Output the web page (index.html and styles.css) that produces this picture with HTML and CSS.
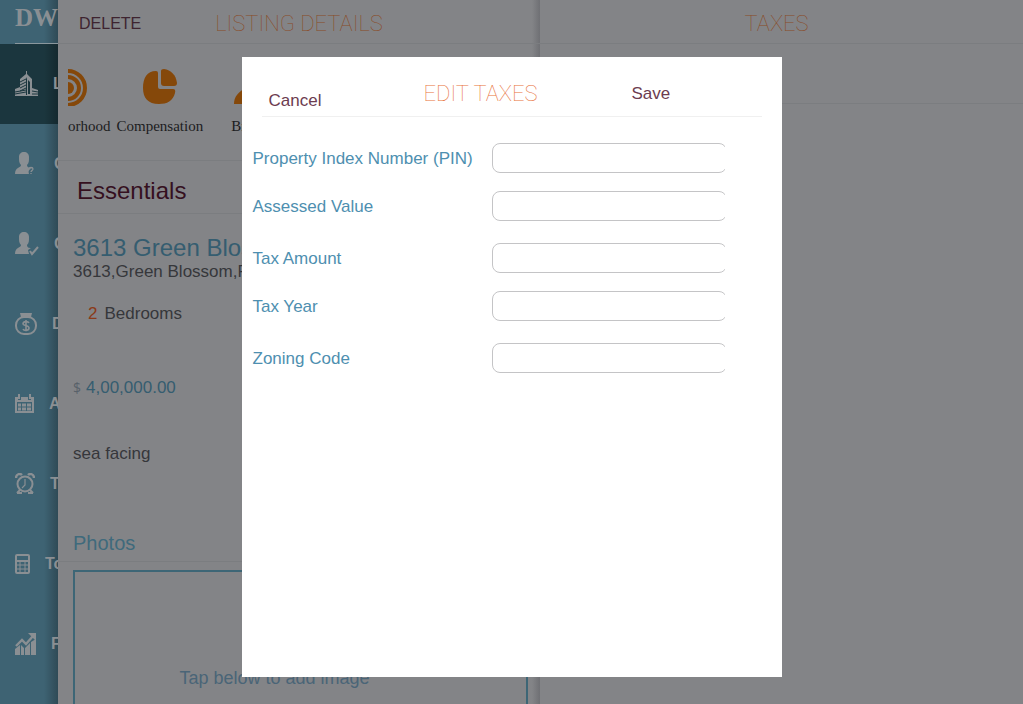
FILE: index.html
```html
<!DOCTYPE html>
<html lang="en">
<head>
    <meta charset="utf-8">
    <title>Edit Taxes</title>
    <link rel="stylesheet" href="styles.css">
</head>
<body>

    <div class="app">
        <nav class="sidebar">
            <div class="logo">DW</div>
            <a href="#" class="nav-item active">
                <svg width="23" height="26" viewBox="0 0 23 26" fill="currentColor">
                    <path d="M5 8l6-5V0h1v3l5 5v16h-5V6l-1 2v16H5z"/>
                    <path d="M0 18l5-2v9H0zM17 17l6 2v6h-6zM0 24h23v1H0z"/>
                    <path d="M5 11l6-3M5 14l6-3M5 17l6-3M5 20l6-3M0 21l11-2M0 23l11-2M17 20l6 1M17 23h6" fill="none" stroke="#1b363e"/>
                    <path d="M13 9l2 2v12h-2z" fill="#1b363e"/>
                </svg>
                <span>L</span>
            </a>
            <a href="#" class="nav-item">
                <svg width="24" height="24" viewBox="0 0 24 24" fill="currentColor">
                    <path d="M4 5c0-3 2-5 5-5s5 2 5 5c0 4 0 6-2 8 0 3 4 3 5 4-3 0-4 2-3 5H0c0-7 6-6 6-9-2-2-2-4-2-8z"/>
                    <path d="M14 17c0-2 4-2 4 0 0 1-2 2-2 3M16 21v1" fill="none" stroke="currentColor" stroke-width="1.3"/>
                </svg>
                <span>C</span>
            </a>
            <a href="#" class="nav-item">
                <svg width="24" height="24" viewBox="0 0 24 24" fill="currentColor">
                    <path d="M4 5c0-3 2-5 5-5s5 2 5 5c0 4 0 6-2 8 0 3 3 3 4 3l-3 2 1 4H0c0-7 6-6 6-9-2-2-2-4-2-8z"/>
                    <path d="M15 19l2 3 6-7" fill="none" stroke="currentColor" stroke-width="2"/>
                </svg>
                <span>C</span>
            </a>
            <a href="#" class="nav-item">
                <svg width="22" height="24" viewBox="0 0 22 24" fill="none" stroke="currentColor">
                    <path d="M5 1h12l-1 4H6z" fill="currentColor" stroke="none"/>
                    <rect x="1" y="5" width="20" height="17" rx="8" stroke-width="2"/>
                    <path d="M14 11c-1-2-6-2-6 1 0 2 6 1 6 4 0 3-5 3-6 1M11 8v11" stroke-width="1.6"/>
                </svg>
                <span>D</span>
            </a>
            <a href="#" class="nav-item">
                <svg width="19" height="20" viewBox="0 0 19 20" fill="none" stroke="currentColor">
                    <path d="M0 3h3v3h3V3h7v3h3V3h3v5H0z" fill="currentColor" stroke="none"/>
                    <path d="M1 7v11h17V7M4 0v5M15 0v5" stroke-width="2"/>
                    <path d="M3 11h13M3 15h13" stroke-width="3" stroke-dasharray="3 1 4 1 4"/>
                </svg>
                <span>A</span>
            </a>
            <a href="#" class="nav-item">
                <svg width="20" height="22" viewBox="0 0 20 22" fill="none" stroke="currentColor">
                    <circle cx="10" cy="11" r="7.5" stroke-width="2"/>
                    <path d="M1 5c0-4 4-5 6-3M19 5c0-4-4-5-6-3" stroke-width="2.4"/>
                    <path d="M10 6v6l-3 3" stroke-width="1.2"/>
                    <path d="M2 20l3-3M18 20l-3-3M2 20h5M18 20h-5" stroke-width="2"/>
                </svg>
                <span>T</span>
            </a>
            <a href="#" class="nav-item">
                <svg width="15" height="20" viewBox="0 0 15 20" fill="none" stroke="currentColor">
                    <rect x="1" y="1" width="13" height="18" rx="1" stroke-width="2"/>
                    <path d="M1 7h13M1 11h13M1 15h13M5 7v12M10 7v12"/>
                    <path d="M1 7h13" stroke-width="2"/>
                </svg>
                <span>To</span>
            </a>
            <a href="#" class="nav-item">
                <svg width="21" height="22" viewBox="0 0 21 22" fill="currentColor">
                    <path d="M0 22v-6l5-4v10zM6 22V12l3 3v7zM10 22v-7l5-5v12zM16 22V9l5-3v16z"/>
                    <path d="M1 13l6-6 4 4 7-8" fill="none" stroke="currentColor" stroke-width="2.4"/>
                    <path d="M13 0h8v8z"/>
                </svg>
                <span>F</span>
            </a>
        </nav>

        <main class="listing">
            <header class="bar">
                <button type="button" class="text-button delete">DELETE</button>
                <h1 class="thin-title">LISTING DETAILS</h1>
            </header>

            <div class="strip">
                <a href="#" class="tab tab-cut">
                    <svg width="20" height="38" viewBox="0 0 20 38" fill="none" stroke="currentColor">
                        <circle cx="0" cy="20" r="6" fill="currentColor" stroke="none"/>
                        <circle cx="0" cy="20" r="11" stroke-width="4"/>
                        <circle cx="0" cy="20" r="17" stroke-width="4"/>
                    </svg>
                    <span>orhood</span>
                </a>
                <a href="#" class="tab">
                    <svg width="36" height="38" viewBox="0 0 36 38" fill="currentColor">
                        <path d="M14 3q2 0 2 2v14q0 2 2 2h13q3 0 2 4c-2 8-8 11-16 11C6 36 1 30 1 20S5 3 14 3z"/>
                        <path d="M19 3q0-2 3-2c7 1 12 6 13 14q0 3-3 3H22q-3 0-3-3z"/>
                    </svg>
                    <span>Compensation</span>
                </a>
                <a href="#" class="tab tab-next">
                    <svg width="36" height="38" viewBox="0 0 36 38" fill="currentColor">
                        <path d="M18 2a8 9 0 0 1 5 17c7 2 13 7 13 17H0c0-7 4-12 13-17A9 9 0 0 1 18 2z"/>
                    </svg>
                    <span>Broker</span>
                </a>
            </div>

            <h2 class="section">Essentials</h2>

            <div class="details">
                <h3 class="address">3613 Green Blossom</h3>
                <p class="street">3613,Green Blossom,F</p>
                <p class="rooms"><b>2</b>Bedrooms</p>
                <p class="price"><small>$</small>4,00,000.00</p>
                <p class="note">sea facing</p>
                <h3 class="photos-title">Photos</h3>
            </div>
            <div class="photos">
                <button type="button" class="photo-box">Tap below to add image</button>
            </div>
        </main>

        <aside class="taxes">
            <header class="bar">
                <h1 class="thin-title">TAXES</h1>
            </header>
            <div class="taxes-row"></div>
        </aside>
    </div>

    <div class="overlay">
        <form class="modal">
            <header class="modal-header">
                <button type="button" class="text-button cancel">Cancel</button>
                <h2 class="thin-title">EDIT TAXES</h2>
                <button type="submit" class="text-button save">Save</button>
            </header>
            <div class="fields">
                <div class="field">
                    <label for="pin">Property Index Number (PIN)</label>
                    <div class="input-clip"><input type="text" id="pin" name="pin"></div>
                </div>
                <div class="field">
                    <label for="assessed">Assessed Value</label>
                    <div class="input-clip"><input type="text" id="assessed" name="assessed"></div>
                </div>
                <div class="field">
                    <label for="amount">Tax Amount</label>
                    <div class="input-clip"><input type="text" id="amount" name="amount"></div>
                </div>
                <div class="field">
                    <label for="year">Tax Year</label>
                    <div class="input-clip"><input type="text" id="year" name="year"></div>
                </div>
                <div class="field">
                    <label for="zoning">Zoning Code</label>
                    <div class="input-clip"><input type="text" id="zoning" name="zoning"></div>
                </div>
            </div>
        </form>
    </div>

</body>
</html>
```
FILE: styles.css
```css
* {
    box-sizing: border-box;
}

body, h1, h2, h3, p {
    margin: 0;
    font-weight: normal;
}

body {
    font-family: "Liberation Sans", Arial, sans-serif;
    font-size: 17px;
    line-height: 20px;
    background: #838487;
    color: #36373b;
}

a {
    color: inherit;
    text-decoration: none;
}

.app {
    display: grid;
    grid-template-columns: 58px 482px 1fr;
    height: 100vh;
    overflow: hidden;
}

.text-button {
    padding: 0;
    border: none;
    background: none;
    font: inherit;
    color: #6c3c50;
    cursor: pointer;
}

.thin-title {
    font-family: Roboto, sans-serif;
    font-weight: 100;
    font-size: 22px;
    line-height: 28px;
    text-align: center;
    white-space: nowrap;
    color: #8a4c28;
}

/* sidebar */
.sidebar {
    overflow: hidden;
    background: linear-gradient(to right, transparent 44px, rgba(0, 0, 0, 0.25)), #3e6373;
    color: #8a8f93;
    font-size: 16px;
}

.logo {
    height: 44px;
    margin-left: 15px;
    padding-top: 4px;
    border-bottom: 1px solid #8a979d;
    font-family: "Liberation Serif", serif;
    font-weight: bold;
    font-size: 25px;
    line-height: 28px;
}

.nav-item {
    display: flex;
    align-items: center;
    gap: 15px;
    height: 80px;
    padding-left: 15px;
    font-weight: bold;
}

.nav-item svg {
    flex: none;
}

.active {
    background: linear-gradient(to right, transparent 44px, rgba(0, 0, 0, 0.25)), #1b363e;
}

/* listing panel */
.bar {
    display: flex;
    justify-content: center;
    align-items: center;
    height: 44px;
    padding-top: 4px;
    border-bottom: 1px solid #7b7d80;
}

.listing {
    overflow: hidden;
    background: linear-gradient(to left, #6f7074, #838487 8px);
}

.delete {
    margin: 0 74px 0 21px;
    font-size: 16px;
    color: #3e2430;
}

.listing .bar {
    justify-content: flex-start;
}

.strip {
    display: flex;
    gap: 6px;
    height: 116px;
    margin-left: 10px;
    padding-top: 24px;
    overflow: hidden;
    font-family: "Liberation Serif", serif;
    font-size: 15px;
    color: #1c1c1e;
}

.tab {
    display: flex;
    flex-direction: column;
    align-items: center;
    gap: 10px;
}

.tab-cut {
    align-items: flex-start;
}

.tab-next {
    margin-left: 22px;
}

.tab svg {
    color: #85480a;
}

.section {
    height: 54px;
    padding: 0 19px;
    border-top: 1px solid #7b7d80;
    border-bottom: 1px solid #7b7d80;
    font-size: 24px;
    line-height: 60px;
    color: #35101f;
}

.details {
    padding: 20px 15px 0;
    border-bottom: 1px solid #7b7d80;
}

.address {
    font-size: 24px;
    line-height: 28px;
    color: #355d70;
}

.rooms {
    margin-top: 22px;
    padding-left: 15px;
}

.rooms b {
    margin-right: 7px;
    font-weight: normal;
    color: #8b3a18;
}

.price {
    margin-top: 54px;
    color: #355d70;
}

.price small {
    margin-right: 5px;
    font-family: "Open Sans", sans-serif;
    font-size: 14px;
    color: #58616a;
}

.note {
    margin-top: 46px;
}

.photos-title {
    margin-top: 65px;
    padding-bottom: 4px;
    font-size: 20px;
    line-height: 28px;
    color: #3f6a7c;
}

.photos {
    padding: 8px 12px 0 15px;
}

.photo-box {
    width: 100%;
    height: 214px;
    padding: 2px 52px 0 0;
    border: 2px solid #3d6676;
    background: none;
    font: inherit;
    font-size: 18px;
    color: #4a6577;
}

/* taxes panel */
.taxes .bar {
    padding-right: 10px;
}

.taxes-row {
    height: 60px;
    border-bottom: 1px solid #7b7d80;
}

/* edit dialog */
.overlay {
    position: fixed;
    inset: 0;
    display: flex;
    justify-content: center;
    align-items: flex-start;
    padding-top: 57px;
}

.modal {
    width: 540px;
    height: 620px;
    background: #fff;
}

.modal-header {
    display: grid;
    grid-template-columns: 53px 1fr 38px;
    align-items: start;
    height: 60px;
    margin: 0 20px;
    padding: 23px 92px 0 7px;
    border-bottom: 1px solid #f0f0f0;
}

.modal-header .thin-title {
    padding-left: 8px;
    color: #e8733c;
}

.cancel {
    margin-top: 11px;
}

.save {
    margin-top: 4px;
}

.fields {
    padding: 26px 0 0 11px;
}

.field {
    display: grid;
    grid-template-columns: 239px 233px;
    align-items: center;
    margin-bottom: 18px;
}

.field:nth-child(even) {
    margin-bottom: 22px;
}

.field label {
    padding-top: 2px;
    color: #4e8fb0;
}

.input-clip {
    height: 30px;
    overflow: hidden;
}

.input-clip input {
    width: calc(100% + 2px);
    height: 30px;
    padding: 0 8px;
    border: 1px solid #c4c4c6;
    border-radius: 8px;
    background: #fff;
    font: inherit;
}
```
